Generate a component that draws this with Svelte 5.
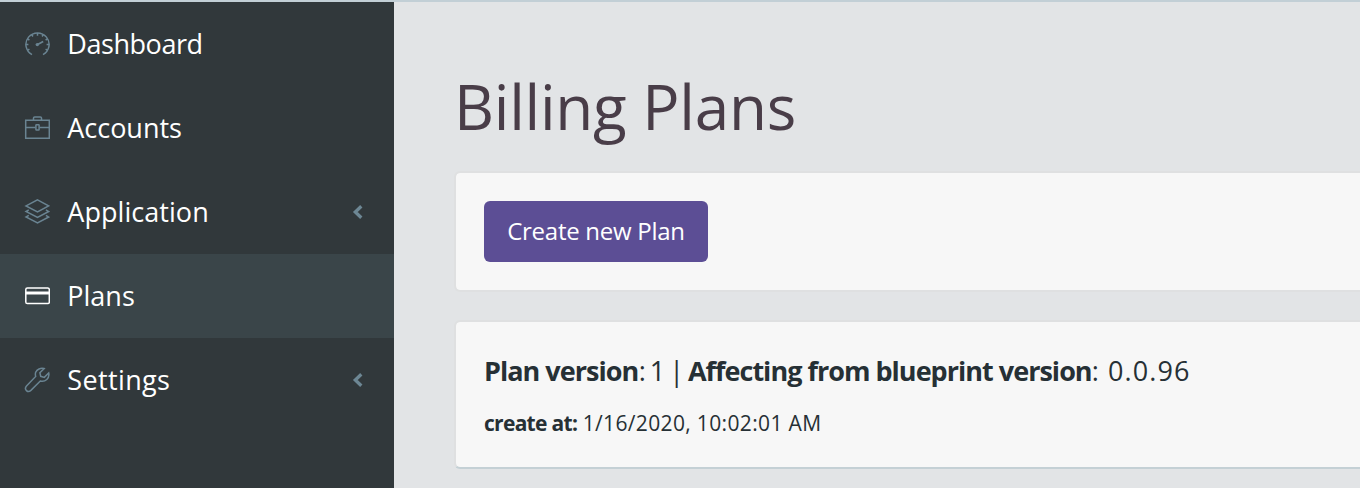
<script>
  const items = [
    { label: 'Dashboard', icon: 'speed', spacing: -0.45 },
    { label: 'Accounts', icon: 'case', spacing: -0.03 },
    { label: 'Application', icon: 'layers', spacing: 0.05, more: true },
    { label: 'Plans', icon: 'card', spacing: 0, active: true },
    { label: 'Settings', icon: 'wrench', spacing: 0.36, more: true }
  ];
</script>

<div class="page">
  <nav>
    {#each items as item}
      <a class="item" class:active={item.active} href="#{item.icon}">
        <svg class="icon" viewBox="0 0 26 26" width="26" height="26" fill="none" stroke="currentColor" stroke-width="1.5">
          {#if item.icon === 'speed'}
            <path d="M8 23.7A11.6 11.6 0 1 1 19 23.7" />
            <path d="M13.5 2v2.8M7.7 3.5l1.2 2M3.4 7.8l2 1.2M1.8 13.6h2.6M3.4 19.4l2-1.2M19.3 3.5l-1.2 2M23.6 7.8l-2 1.2M25.2 13.6h-2.6M23.6 19.4l-2-1.2" />
            <path d="M13.2 13.7l6-3.2" stroke-width="1.7" />
            <circle cx="13.3" cy="13.6" r="1.7" fill="currentColor" stroke="none" />
          {:else if item.icon === 'case'}
            <path d="M1.7 5.3h23.6v18H1.7zM9.5 5.3V3.1q0-1.2 1.2-1.2h5.6q1.2 0 1.2 1.2v2.2M1.7 12.5h9.8M15.5 12.5h9.8" />
            <rect x="11.9" y="9.7" width="3.2" height="5.4" rx=".6" />
          {:else if item.icon === 'layers'}
            <path d="M13.5 .8 24.6 6.9 13.5 12.9 2 6.9z" />
            <path d="M4.8 10.9 2 12.5l11.5 6 11.2-6-2.8-1.6M4.8 16.4 2 18l11.5 6 11.2-6-2.8-1.6" />
          {:else if item.icon === 'card'}
            <rect x="1.8" y="5" width="23.5" height="15.6" rx="1.6" />
            <path d="M1.8 10h23.5" stroke-width="3" />
          {:else}
            <path d="M20.1 1.6c-3.5-.9-7.2.6-8.4 3.7-.5 1.3-.4 2.7 0 4.1L2.5 19.1c-2.9 3.4 1.3 7.2 4.4 4.3l9.4-9.4c4.9 1.3 9.6-2.8 8.4-8l-4.4 4.4-3.6-1.1-.8-3.6z" />
          {/if}
        </svg>
        <span class="label" style:letter-spacing="{item.spacing}px">{item.label}</span>
        {#if item.more}
          <svg class="chevron" viewBox="0 0 12 14" width="12" height="14" fill="none" stroke="currentColor" stroke-width="3.3"><path d="M9.3 1.2 3.3 7 9.3 12.8" /></svg>
        {/if}
      </a>
    {/each}
  </nav>
  <main>
    <h1>Billing Plans</h1>
    <section class="panel actions">
      <button><span>Create new Plan</span></button>
    </section>
    <section class="panel plan">
      <h2><b class="version">Plan version</b><span class="number">{': 1 | '}</span><b class="affecting">Affecting from blueprint version</b><span class="blueprint">: 0.0.96</span></h2>
      <p><b>create at:</b> <span class="date">1/16/2020, 10:02:01 AM</span></p>
    </section>
  </main>
</div>

<style>
  :global(body) { margin: 0; overflow: hidden; }
  .page {
    box-sizing: border-box; width: 1360px; height: 488px; display: flex; overflow: hidden;
    border-top: 2px solid #c2cfd6; background: #e2e4e6; color: #263035;
    font-family: "Open Sans", sans-serif;
  }
  nav { flex: 0 0 394px; background: #31383b; }
  .item {
    box-sizing: border-box; height: 84px; padding: 0 30px 0 24px; display: flex; align-items: center;
    color: #fff; text-decoration: none; font-size: 27px; line-height: 36px;
  }
  .item.active { background: #3a4549; }
  .icon { flex: none; color: #6a8492; margin: 0 17.3px 1px 0; }
  .active .icon { color: #fff; }
  .label { white-space: nowrap; }
  .chevron { margin: 0 0 1px auto; color: #6d8794; }
  main { flex: none; width: 1000px; padding-left: 60px; }
  h1 { margin: 62px 0 23px; color: #493d48; font-size: 62px; line-height: 84px; letter-spacing: -.27px; font-weight: 400; white-space: nowrap; }
  .panel { box-sizing: border-box; border: 2px solid #dfe0e1; border-radius: 6px; background: #f7f7f7; background-clip: padding-box; }
  .actions { height: 121px; padding: 28px; margin-bottom: 28px; }
  button {
    display: flex; align-items: center; justify-content: center; width: 224px; height: 61px; padding: 0;
    border: 0; border-radius: 6px; background: #5c4e95; color: #fff; font-family: inherit; font-size: 24px; letter-spacing: -.27px; white-space: nowrap;
  }
  button span { padding-bottom: 2px; }
  .plan { height: 149px; padding: 30px 28px; border-bottom-color: #c4d0d5; }
  h2 { margin: 0; font-size: 27px; line-height: 37px; font-weight: 400; white-space: pre; }
  h2 b { font-weight: 700; letter-spacing: -.98px; }
  .number { letter-spacing: -.7px; word-spacing: -1.7px; }
  .number { padding-left: .6px; }
  .blueprint { letter-spacing: 1.1px; }
  p { margin: 19px 0 0; font-size: 21px; line-height: 30px; white-space: nowrap; }
  p b { font-weight: 700; letter-spacing: -.7px; }
  .date { letter-spacing: .35px; }
</style>
